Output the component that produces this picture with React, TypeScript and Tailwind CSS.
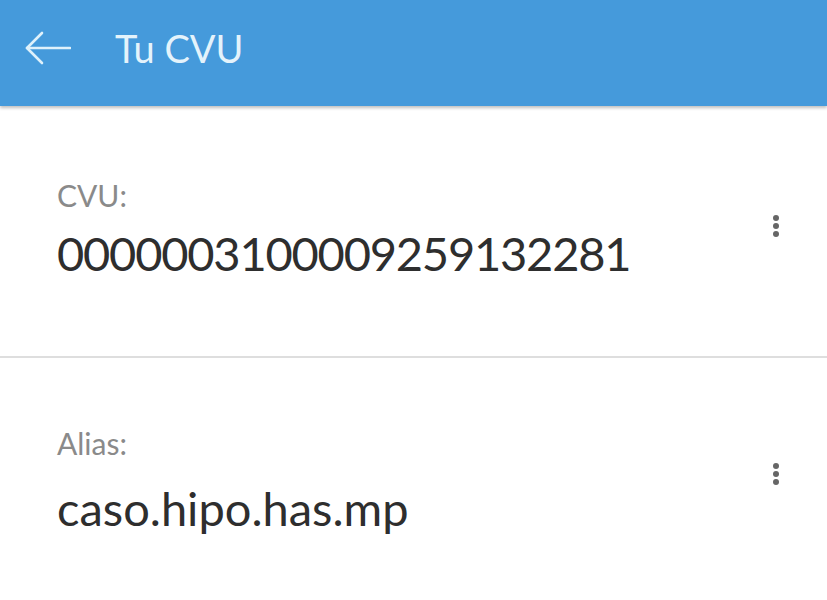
import { FC } from "react";

const Dots: FC = () => (
  <div className="mt-[35px] flex w-[8px] flex-col items-center gap-[2px]">
    <span className="h-[6px] w-[6px] rounded-full bg-[#666]" />
    <span className="h-[6px] w-[6px] rounded-full bg-[#666]" />
    <span className="h-[6px] w-[6px] rounded-full bg-[#666]" />
  </div>
);

const Field: FC<{ label: string; value: string; className?: string; valueClass?: string }> = ({
  label,
  value,
  className,
  valueClass,
}) => (
  <div className={`flex items-start justify-between pl-[57px] pr-[47px] ${className ?? ""}`}>
    <div className="flex flex-col">
      <span className="text-[30px] leading-none text-[#8a8a8a]">{label}</span>
      <span className={`text-[47px] leading-none text-[#2e2e2e] ${valueClass ?? ""}`}>{value}</span>
    </div>
    <Dots />
  </div>
);

export default function App() {
  return (
    <div className="h-[600px] w-[827px] overflow-hidden bg-white font-['Lato',sans-serif]">
      <header className="relative z-10 flex h-[106px] items-center bg-[#459adb] pb-[10px] shadow-[0_2px_3px_rgba(0,0,0,0.25)]">
        <div className="flex w-[115px] justify-start pl-[25px]">
          <svg width="46" height="34" viewBox="0 0 46 34" fill="none" stroke="#dff1fb" strokeWidth="2.6" strokeLinecap="round" strokeLinejoin="round">
            <path d="M45 17H2" />
            <path d="M17 2L2 17L17 32" />
          </svg>
        </div>
        <h1 className="text-[38px] font-normal text-[#e4f3fb]">Tu CVU</h1>
      </header>
      <Field
        label="CVU:"
        value="0000003100009259132281"
        className="pt-[74px] pb-[79px]"
        valueClass="mt-[20px] tracking-[-1.2px]"
      />
      <div className="h-[2px] bg-[#dedede]" />
      <Field label="Alias:" value="caso.hipo.has.mp" className="pt-[70px]" valueClass="mt-[27px]" />
    </div>
  );
}
